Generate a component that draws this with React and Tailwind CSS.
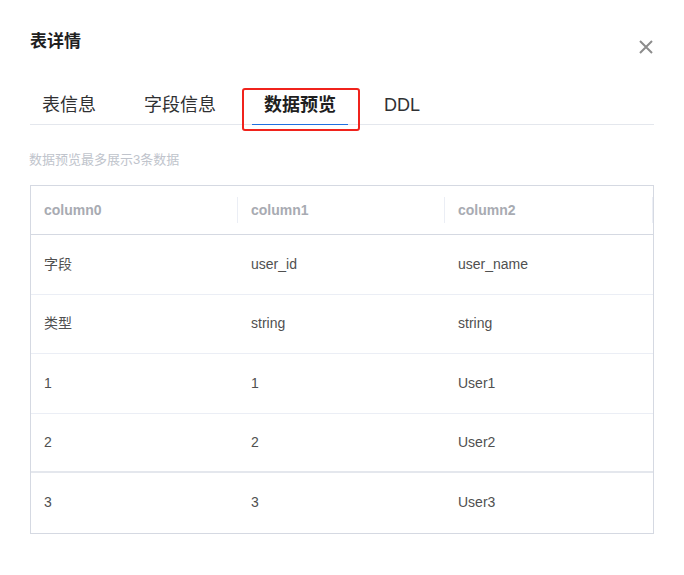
const columns = ["column0", "column1", "column2"];

const rows = [
  ["字段", "user_id", "user_name"],
  ["类型", "string", "string"],
  ["1", "1", "User1"],
  ["2", "2", "User2"],
  ["3", "3", "User3"],
];

const tabs = ["表信息", "字段信息", "数据预览", "DDL"];

export default function App() {
  return (
    <div className="w-[684px] h-[575px] bg-white font-['Liberation_Sans','Noto_Sans_CJK_SC',sans-serif]">
      <div className="px-[30px] pt-[30px]">
        {/* header */}
        <div className="flex items-start justify-between">
          <h2 className="text-[17px] leading-6 font-bold text-[#1f1f1f]">表详情</h2>
          <button className="mt-[9px] text-[#8c8c8c]">
            <svg width="16" height="16" viewBox="0 0 16 16" fill="none">
              <path d="M2 2L14 14M14 2L2 14" stroke="currentColor" strokeWidth="2" />
            </svg>
          </button>
        </div>

        {/* tabs */}
        <div className="relative mt-[38px] flex border-b border-[#e4e7ed]">
          {tabs.map((t, i) => (
            <div
              key={t}
              className={
                "relative px-[12px] pb-[7px] text-[18px] leading-6 " +
                (i === 0 ? "" : "ml-[24px] ") +
                (i === 2 ? "font-bold text-[#1f1f1f]" : "text-[#303133]")
              }
            >
              {t}
              {i === 2 && (
                <div className="absolute left-0 right-0 -bottom-px h-px bg-[#1f6fe0]" />
              )}
            </div>
          ))}
          <div className="absolute left-[212px] top-[-5px] w-[118px] h-[43px] rounded-[3px] border-2 border-[#f0231c]" />
        </div>

        <p className="mt-[25px] -ml-px text-[13px] leading-5 text-[#c0c4cc]">数据预览最多展示3条数据</p>

        {/* table */}
        <div className="mt-[15px] w-[624px] border border-[#d5d9e2]">
          <div className="grid grid-cols-[207px_207px_208px] h-[49px] border-b border-[#d5d9e2]">
            {columns.map((c) => (
              <div key={c} className="flex items-center justify-between pl-[13px] text-[14px] font-bold text-[#a8abb2]">
                <span>{c}</span>
                <span className="h-[26px] w-px bg-[#ebeef5]" />
              </div>
            ))}
          </div>
          {rows.map((r, i) => (
            <div
              key={i}
              className={
                "grid grid-cols-[207px_207px_208px] h-[59.5px] " +
                (i === 3 ? "border-b-2 border-[#e4e7ed] " : i < 4 ? "border-b border-[#ebeef5] " : "")
              }
            >
              {r.map((v, j) => (
                <div key={j} className="flex items-center pl-[13px] text-[14px] text-[#505050]">
                  {v}
                </div>
              ))}
            </div>
          ))}
        </div>
      </div>
    </div>
  );
}
